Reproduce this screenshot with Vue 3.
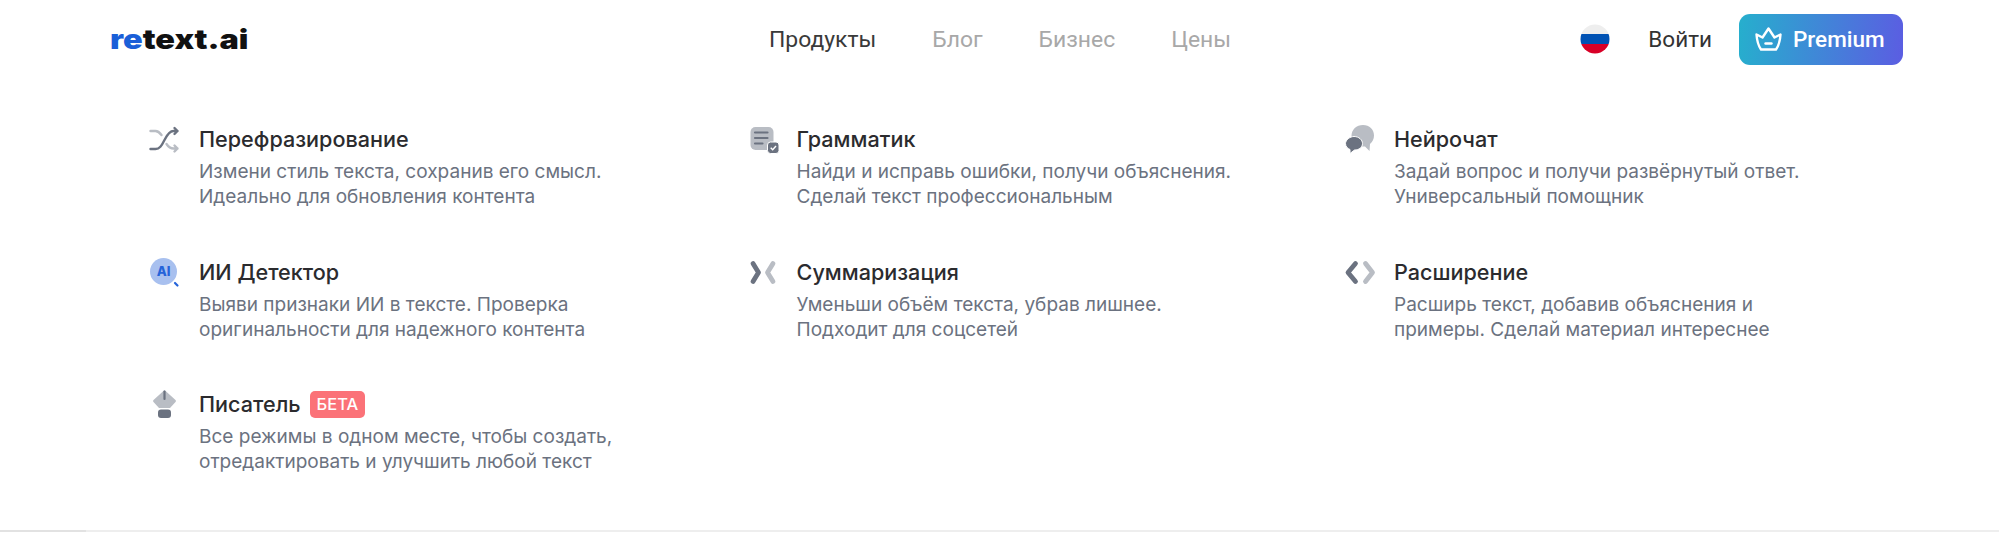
<template>
  <div class="page">
    <header class="header">
      <div class="logo"><span class="logo-text"><span class="logo-re">re</span>text.ai</span></div>
      <nav class="nav">
        <a
          v-for="(link, i) in links"
          :key="link"
          class="nav-link"
          :class="{ active: i === 0 }"
        >{{ link }}</a>
      </nav>
      <div class="actions">
        <svg class="flag" viewBox="0 0 30 30">
          <defs>
            <clipPath id="flag-clip"><circle cx="15" cy="15" r="14.5" /></clipPath>
          </defs>
          <g clip-path="url(#flag-clip)">
            <rect width="30" height="10" fill="#eeeeee" />
            <rect y="10" width="30" height="10" fill="#0052b4" />
            <rect y="20" width="30" height="10" fill="#d80027" />
          </g>
        </svg>
        <a class="login">Войти</a>
        <button class="premium">
          <svg class="crown" viewBox="0 0 27 24" fill="none" stroke="#fff" stroke-width="2.4" stroke-linejoin="round" stroke-linecap="round">
            <path d="M1.5 7.5 7.5 10.500 13.500 1.500 19.500 10.500 25.500 7.500 C25 14 23.500 19 21 22.500H6C3.500 19 2 14 1.500 7.500Z" />
            <path d="M10.500 16.500H16.500" />
          </svg>
          Premium
        </button>
      </div>
    </header>

    <main class="grid">
      <div v-for="item in items" :key="item.title" class="item">
        <svg class="icon" viewBox="0 0 34 30" v-html="item.icon" />
        <div>
          <div class="title">
            {{ item.title }}
            <span v-if="item.badge" class="badge">{{ item.badge }}</span>
          </div>
          <p class="desc">{{ item.line1 }}<br>{{ item.line2 }}</p>
        </div>
      </div>
    </main>

    <div class="scroll"><div class="thumb" /></div>
  </div>
</template>

<script setup>
const links = ['Продукты', 'Блог', 'Бизнес', 'Цены']

const dark = '#6b7280'
const light = '#b9bdc4'

const items = [
  {
    title: 'Перефразирование',
    line1: 'Измени стиль текста, сохранив его смысл.',
    line2: 'Идеально для обновления контента',
    icon: `<g transform="translate(1.500 0)" fill="none" stroke-width="2.400" stroke-linecap="round" stroke-linejoin="round">
      <path stroke="${light}" d="M1 6H6C9 6 10.500 8 12 10M17 19C19 22 21 23.500 24 23.500H28M25 20.500 28 23.500 25 26.500"/>
      <path stroke="${dark}" d="M1 24H6C10 24 12 21 15 15 17.500 10 20 6 24 6H28M25 3 28 6 25 9"/></g>`
  },
  {
    title: 'Грамматик',
    line1: 'Найди и исправь ошибки, получи объяснения.',
    line2: 'Сделай текст профессиональным',
    icon: `<g transform="translate(4.500 2)"><rect x="0" y="0" width="23" height="23" rx="5" fill="${light}"/>
      <path d="M4.500 5.500H17M4.500 11H17M4.500 16.500H12" stroke="${dark}" stroke-width="2.200" stroke-linecap="round"/>
      <rect x="17" y="15" width="11.500" height="11.500" rx="3" fill="${dark}" stroke="#fff" stroke-width="1"/>
      <path d="M20.200 20.800 22.200 22.800 25.500 19" fill="none" stroke="#fff" stroke-width="1.400"/></g>`
  },
  {
    title: 'Нейрочат',
    line1: 'Задай вопрос и получи развёрнутый ответ.',
    line2: 'Универсальный помощник',
    icon: `<g transform="translate(2 0)"><path fill="${light}" d="M18 0C24.500 0 29 4.500 29 10.500 29 14 27.500 17 25 19L24.500 26 20 21.500H10C8 19 6.500 14 6.500 11 6.500 4.500 11.500 0 18 0Z"/>
      <path fill="${dark}" stroke="#fff" stroke-width="1" d="M9 11.500C14 11.500 17.500 15 17.500 18.500 17.500 22.500 14 25 9.500 25L5 28.500V24.500C2.500 23.500 .500 21.500 .500 18.500 .500 15 5 11.500 9 11.500Z"/></g>`
  },
  {
    title: 'ИИ Детектор',
    line1: 'Выяви признаки ИИ в тексте. Проверка',
    line2: 'оригинальности для надежного контента',
    icon: `<g transform="translate(2 0)"><circle cx="13.500" cy="13.500" r="13.500" fill="#a8c0ef"/>
      <text x="13.500" y="18" text-anchor="middle" font-size="13" font-weight="800" font-family="Inter, sans-serif" fill="#2563d9">AI</text>
      <path d="M25 25 27.500 27.500" stroke="#2563d9" stroke-width="2.200" stroke-linecap="round"/></g>`
  },
  {
    title: 'Суммаризация',
    line1: 'Уменьши объём текста, убрав лишнее.',
    line2: 'Подходит для соцсетей',
    icon: `<path d="M7 5.500 12.500 14.500 7 23.500" fill="none" stroke="${dark}" stroke-width="4.800" stroke-linecap="round" stroke-linejoin="round"/>
      <path d="M27 5.500 21.500 14.500 27 23.500" fill="none" stroke="${light}" stroke-width="4.800" stroke-linecap="round" stroke-linejoin="round"/>`
  },
  {
    title: 'Расширение',
    line1: 'Расширь текст, добавив объяснения и',
    line2: 'примеры. Сделай материал интереснее',
    icon: `<path d="M12.500 5.500 5 14.500 12.500 23.500" fill="none" stroke="${dark}" stroke-width="4.800" stroke-linecap="round" stroke-linejoin="round"/>
      <path d="M22.500 5.500 29.500 14.500 22.500 23.500" fill="none" stroke="${light}" stroke-width="4.800" stroke-linecap="round" stroke-linejoin="round"/>`
  },
  {
    title: 'Писатель',
    badge: 'БЕТА',
    line1: 'Все режимы в одном месте, чтобы создать,',
    line2: 'отредактировать и улучшить любой текст',
    icon: `<path fill="${light}" d="M16.500 0 27.500 10Q28.500 11 27.500 12L22 18H11L5.500 12Q4.500 11 5.500 10Z"/>
      <path d="M16.500 1.500V9" stroke="${dark}" stroke-width="2.200" stroke-linecap="round"/>
      <rect x="10" y="19.500" width="13" height="8.500" rx="3" fill="${dark}"/>`
  }
]
</script>

<style scoped>
.page {
  position: relative;
  width: 1999px;
  height: 533px;
  background: #fff;
  overflow: hidden;
  font-family: Inter, "Noto Sans", sans-serif;
}

.header {
  display: flex;
  align-items: center;
  height: 78px;
  padding: 0 96px 0 110px;
}

.logo {
  width: 659px;
}

.logo-text {
  display: inline-block;
  font-family: Inter, sans-serif;
  font-size: 27px;
  font-weight: 900;
  color: #111;
  transform: scaleX(1.2);
  transform-origin: left center;
}

.logo-re {
  color: #1a5fd8;
}

.nav {
  display: flex;
  gap: 56px;
}

.nav-link {
  font-family: Roboto, sans-serif;
  font-size: 22.9px;
  color: #a8a8a8;
}

.nav-link.active {
  color: #3a3a3a;
}

.actions {
  display: flex;
  align-items: center;
  margin-left: auto;
}

.flag {
  width: 30px;
  height: 30px;
}

.login {
  margin: 0 27px 0 38px;
  font-family: Roboto, sans-serif;
  font-size: 22.5px;
  color: #333;
}

.premium {
  display: flex;
  align-items: center;
  gap: 11px;
  width: 164px;
  height: 51px;
  padding: 0 0 0 16px;
  border: none;
  border-radius: 11px;
  background: linear-gradient(95deg, #26afcd, #5b5de2);
  color: #fff;
  font-family: Roboto, sans-serif;
  font-size: 22.5px;
  font-weight: 500;
}

.crown {
  width: 27px;
  height: 24px;
}

.grid {
  display: grid;
  grid-template-columns: repeat(3, 597.5px);
  grid-auto-rows: 132.5px;
  padding: 47px 0 0 148px;
}

.item {
  display: flex;
  gap: 17px;
}

.icon {
  flex: none;
  width: 34px;
  height: 30px;
}

.title {
  display: flex;
  align-items: center;
  gap: 9px;
  height: 28px;
  font-size: 21.6px;
  font-weight: 500;
  color: #2b2b2e;
}

.badge {
  padding: 0 7px;
  border-radius: 5px;
  background: #fb7278;
  color: #fff;
  font-size: 16.5px;
  font-weight: 500;
  line-height: 27px;
}

.desc {
  margin: 6px 0 0;
  font-size: 19.05px;
  line-height: 25px;
  color: #6b7280;
}

.scroll {
  position: absolute;
  left: 0;
  right: 0;
  bottom: 1px;
  height: 2px;
  background: #eeeeee;
}

.thumb {
  width: 86px;
  height: 100%;
  background: #e2e2e2;
}
</style>
